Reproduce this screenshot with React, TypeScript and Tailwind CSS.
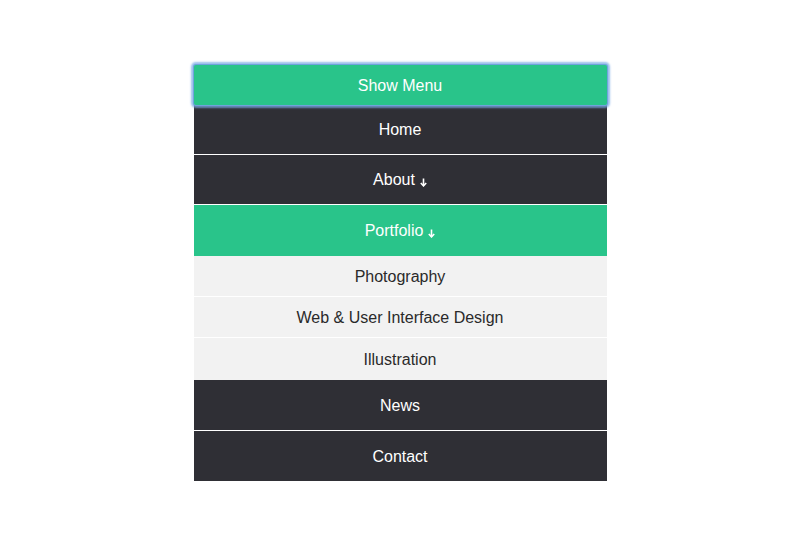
import { useState } from 'react';

type Item = {
  label: string;
  arrow?: boolean;
  active?: boolean;
  children?: string[];
};

const items: Item[] = [
  { label: 'Home' },
  { label: 'About', arrow: true },
  {
    label: 'Portfolio',
    arrow: true,
    active: true,
    children: ['Photography', 'Web & User Interface Design', 'Illustration']
  },
  { label: 'News' },
  { label: 'Contact' }
];

function DownArrow() {
  return (
    <svg width="7" height="9" viewBox="0 0 7 9" className="ml-[5px] mt-[5px]">
      <path d="M3.5 0.5v7" stroke="currentColor" strokeWidth="1.6" />
      <path d="M0.8 5l2.7 2.9 2.7-2.9" fill="none" stroke="currentColor" strokeWidth="1.6" />
    </svg>
  );
}

export default function App() {
  const [open, setOpen] = useState(true);

  return (
    <div className="flex min-h-[550px] w-full justify-center bg-white pt-[65px] font-['Liberation_Sans',Arial,sans-serif]">
      <div className="flex w-[413px] flex-col">
        <button
          type="button"
          onClick={() => setOpen(!open)}
          className="relative z-10 h-10 w-full rounded-[2px] bg-[#29c48a] pt-px text-base text-white shadow-[0_0_0_1px_#6fa3db,0_0_2px_3px_rgba(120,170,230,0.75)]"
        >
          Show Menu
        </button>
        {open && (
          <ul className="flex flex-col">
            {items.map((item) => (
              <li key={item.label}>
                <a
                  href="#"
                  className={`flex items-center justify-center pt-px text-base text-white ${
                    item.active
                      ? 'h-[51px] bg-[#29c48a]'
                      : item.label === 'Contact'
                        ? 'h-[50px] bg-[#2f2f35]'
                        : 'h-[50px] border-b border-white bg-[#2f2f35]'
                  } ${item.label === 'News' ? 'h-[51px]' : ''}`}
                >
                  {item.label}
                  {item.arrow && <DownArrow />}
                </a>
                {item.children && (
                  <ul className="flex flex-col">
                    {item.children.map((child, i) => (
                      <li key={child}>
                        <a
                          href="#"
                          className={`flex items-center justify-center bg-[#f2f2f2] pt-px text-base text-[#2a2a2a] ${
                            i < item.children!.length - 1 ? 'h-[41px] border-b border-white' : 'h-[42px]'
                          }`}
                        >
                          {child}
                        </a>
                      </li>
                    ))}
                  </ul>
                )}
              </li>
            ))}
          </ul>
        )}
      </div>
    </div>
  );
}
